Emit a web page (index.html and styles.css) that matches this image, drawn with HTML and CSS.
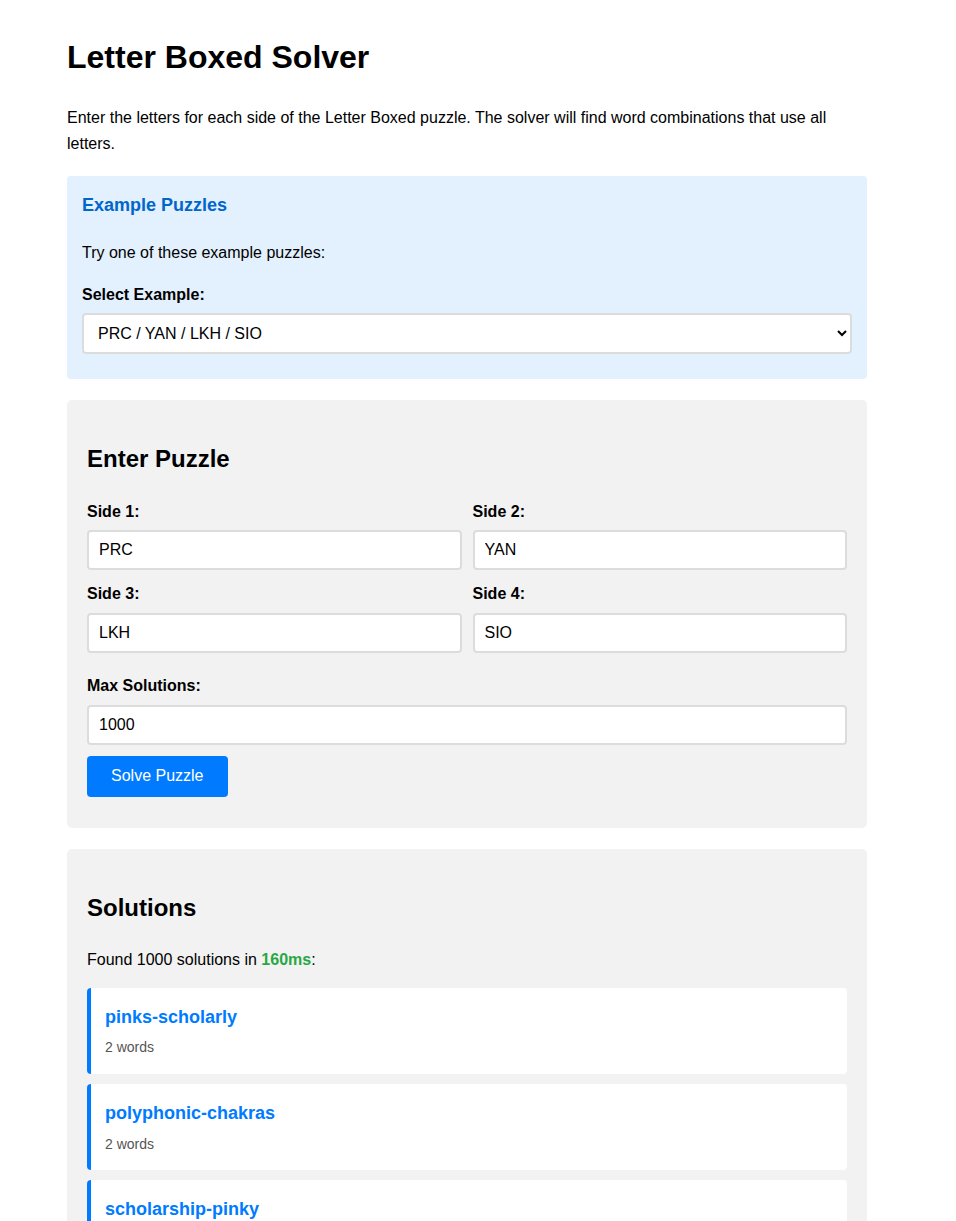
FILE: index.html
```html
<!DOCTYPE html>
<html lang="en">
<head>
<meta charset="utf-8">
<title>Letter Boxed Solver</title>
<link rel="stylesheet" href="styles.css">
</head>
<body>
<div class="page">
  <h1 class="title">Letter Boxed Solver</h1>
  <p class="intro">Enter the letters for each side of the Letter Boxed puzzle. The solver will find word combinations that use all letters.</p>

  <section class="examples">
    <h3 class="examples-title">Example Puzzles</h3>
    <p class="examples-text">Try one of these example puzzles:</p>
    <label class="label" for="example">Select Example:</label>
    <select id="example" class="select">
      <option>PRC / YAN / LKH / SIO</option>
    </select>
  </section>

  <section class="panel">
    <h2 class="panel-title">Enter Puzzle</h2>
    <div class="sides">
      <div class="field">
        <label class="label" for="s1">Side 1:</label>
        <input id="s1" class="input" type="text" value="PRC">
      </div>
      <div class="field">
        <label class="label" for="s2">Side 2:</label>
        <input id="s2" class="input" type="text" value="YAN">
      </div>
      <div class="field">
        <label class="label" for="s3">Side 3:</label>
        <input id="s3" class="input" type="text" value="LKH">
      </div>
      <div class="field">
        <label class="label" for="s4">Side 4:</label>
        <input id="s4" class="input" type="text" value="SIO">
      </div>
    </div>
    <div class="field">
      <label class="label" for="max">Max Solutions:</label>
      <input id="max" class="input input-wide" type="text" value="1000">
    </div>
    <button class="solve" type="button">Solve Puzzle</button>
  </section>

  <section class="panel">
    <h2 class="panel-title">Solutions</h2>
    <p class="found">Found 1000 solutions in <strong class="time">160ms</strong>:</p>
    <div class="solution">
      <div class="solution-words">pinks-scholarly</div>
      <div class="solution-meta">2 words</div>
    </div>
    <div class="solution">
      <div class="solution-words">polyphonic-chakras</div>
      <div class="solution-meta">2 words</div>
    </div>
    <div class="solution">
      <div class="solution-words">scholarship-pinky</div>
      <div class="solution-meta">2 words</div>
    </div>
    <div class="solution">
      <div class="solution-words">polyphonic-sharks</div>
      <div class="solution-meta">2 words</div>
    </div>
  </section>
</div>
</body>
</html>
```

FILE: styles.css
```css
html, body {
  margin: 0;
  padding: 0;
  background: #ffffff;
}

body {
  font-family: "Liberation Sans", Arial, sans-serif;
  font-size: 16px;
  line-height: 1.6;
  color: #000;
}

.page {
  width: 800px;
  margin-left: 67px;
  padding-top: 11px;
  padding-bottom: 40px;
}

.title {
  font-size: 32px;
  font-weight: bold;
  margin: 21px 0 22px;
}

.intro {
  margin: 0 0 20px;
}

.examples {
  background: #e3f0fd;
  border-radius: 4px;
  padding: 15px;
  margin-bottom: 21px;
}

.examples-title {
  font-size: 18px;
  color: #0066cc;
  margin: 0 0 20px;
}

.examples-text {
  margin: 0 0 16px;
}

.label {
  display: block;
  font-weight: bold;
  margin-bottom: 6px;
}

.select {
  display: block;
  width: 100%;
  height: 41px;
  box-sizing: border-box;
  padding: 0 10px;
  font-family: "Liberation Sans", Arial, sans-serif;
  font-size: 16px;
  color: #000;
  background: #fff;
  border: 2px solid #dcdcdc;
  border-radius: 4px;
  margin-bottom: 10px;
}

.panel {
  background: #f2f2f2;
  border-radius: 5px;
  padding: 20px;
  margin-bottom: 21px;
}

.panel-title {
  font-size: 24px;
  margin: 20px 0;
}

.sides {
  display: grid;
  grid-template-columns: 1fr 1fr;
  column-gap: 11px;
  row-gap: 11px;
  margin-bottom: 20px;
}

.input {
  display: block;
  width: 100%;
  height: 40px;
  box-sizing: border-box;
  padding: 0 10px;
  font-family: "Liberation Sans", Arial, sans-serif;
  font-size: 16px;
  color: #000;
  background: #fff;
  border: 2px solid #dcdcdc;
  border-radius: 4px;
  margin: 0;
}

.input-wide {
  margin-bottom: 11px;
}

.solve {
  display: block;
  height: 41px;
  padding: 0 24px;
  font-family: "Liberation Sans", Arial, sans-serif;
  font-size: 16px;
  color: #fff;
  background: #007bff;
  border: none;
  border-radius: 4px;
  margin-bottom: 11px;
}

.found {
  margin: 0 0 15px;
}

.time {
  color: #28a745;
}

.solution {
  background: #fff;
  border-left: 4px solid #007bff;
  border-radius: 4px;
  padding: 15px 15px 15px 14px;
  margin-bottom: 10px;
}

.solution-words {
  font-size: 18px;
  font-weight: bold;
  color: #007bff;
  margin-bottom: 5px;
}

.solution-meta {
  font-size: 14px;
  color: #555;
}
```
